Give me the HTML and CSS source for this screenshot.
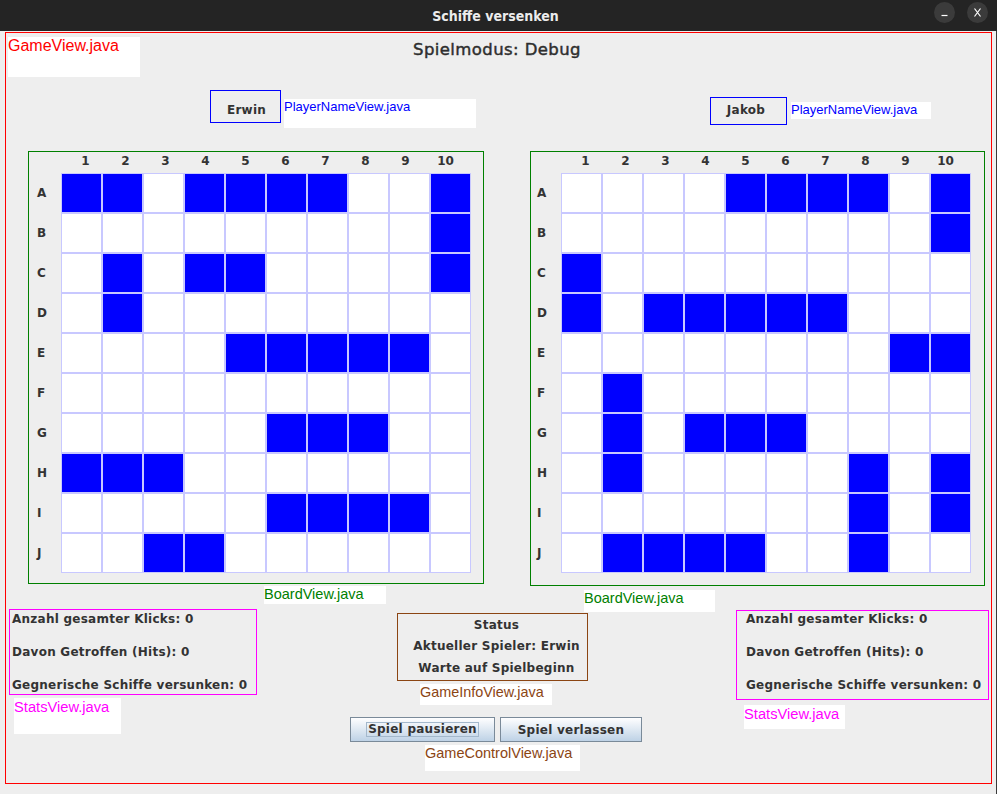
FILE: index.html
```html
<!DOCTYPE html>
<html lang="de">
<head>
<meta charset="utf-8">
<title>Schiffe versenken</title>
<link rel="stylesheet" href="styles.css">
</head>
<body>
<div class="titlebar">
  <div></div>
  <div class="title">Schiffe versenken</div>
  <div class="wbtns">
    <span class="wbtn"><svg width="21" height="21" viewBox="0 0 21 21"><line x1="7.5" y1="13.5" x2="13.5" y2="13.5" stroke="#fff" stroke-width="1.2"/></svg></span>
    <span class="wbtn"><svg width="21" height="21" viewBox="0 0 21 21"><path d="M7.5 6.5 L13.5 14.5 M13.5 6.5 L7.5 14.5" stroke="#fff" stroke-width="1.2" fill="none"/></svg></span>
  </div>
</div>
<div class="window">
<div class="gameview">
  <div class="header">
    <div class="tag tag-game">GameView.java</div>
    <div class="mode">Spielmodus: Debug</div>
    <div></div>
  </div>
  <div class="players">
    <div class="pgroup pgroup-left">
      <div class="pname pname-erwin">Erwin</div>
      <div class="tag tag-player tag-player-left">PlayerNameView.java</div>
    </div>
    <div class="pgroup pgroup-right">
      <div class="pname pname-jakob">Jakob</div>
      <div class="tag tag-player tag-player-right">PlayerNameView.java</div>
    </div>
  </div>
  <div class="boards">
    <div class="boardcol boardcol-left">
      <div class="board board-left">
        <div class="colhead"><span>1</span><span>2</span><span>3</span><span>4</span><span>5</span><span>6</span><span>7</span><span>8</span><span>9</span><span>10</span></div>
        <div class="grid">
          <span class="rl">A</span><i class="c s"></i><i class="c s"></i><i class="c"></i><i class="c s"></i><i class="c s"></i><i class="c s"></i><i class="c s"></i><i class="c"></i><i class="c"></i><i class="c s"></i>
          <span class="rl">B</span><i class="c"></i><i class="c"></i><i class="c"></i><i class="c"></i><i class="c"></i><i class="c"></i><i class="c"></i><i class="c"></i><i class="c"></i><i class="c s"></i>
          <span class="rl">C</span><i class="c"></i><i class="c s"></i><i class="c"></i><i class="c s"></i><i class="c s"></i><i class="c"></i><i class="c"></i><i class="c"></i><i class="c"></i><i class="c s"></i>
          <span class="rl">D</span><i class="c"></i><i class="c s"></i><i class="c"></i><i class="c"></i><i class="c"></i><i class="c"></i><i class="c"></i><i class="c"></i><i class="c"></i><i class="c"></i>
          <span class="rl">E</span><i class="c"></i><i class="c"></i><i class="c"></i><i class="c"></i><i class="c s"></i><i class="c s"></i><i class="c s"></i><i class="c s"></i><i class="c s"></i><i class="c"></i>
          <span class="rl">F</span><i class="c"></i><i class="c"></i><i class="c"></i><i class="c"></i><i class="c"></i><i class="c"></i><i class="c"></i><i class="c"></i><i class="c"></i><i class="c"></i>
          <span class="rl">G</span><i class="c"></i><i class="c"></i><i class="c"></i><i class="c"></i><i class="c"></i><i class="c s"></i><i class="c s"></i><i class="c s"></i><i class="c"></i><i class="c"></i>
          <span class="rl">H</span><i class="c s"></i><i class="c s"></i><i class="c s"></i><i class="c"></i><i class="c"></i><i class="c"></i><i class="c"></i><i class="c"></i><i class="c"></i><i class="c"></i>
          <span class="rl">I</span><i class="c"></i><i class="c"></i><i class="c"></i><i class="c"></i><i class="c"></i><i class="c s"></i><i class="c s"></i><i class="c s"></i><i class="c s"></i><i class="c"></i>
          <span class="rl">J</span><i class="c"></i><i class="c"></i><i class="c s"></i><i class="c s"></i><i class="c"></i><i class="c"></i><i class="c"></i><i class="c"></i><i class="c"></i><i class="c"></i>
        </div>
      </div>
      <div class="tag tag-board tag-board-left">BoardView.java</div>
    </div>
    <div class="boardcol boardcol-right">
      <div class="board board-right">
        <div class="colhead"><span>1</span><span>2</span><span>3</span><span>4</span><span>5</span><span>6</span><span>7</span><span>8</span><span>9</span><span>10</span></div>
        <div class="grid">
          <span class="rl">A</span><i class="c"></i><i class="c"></i><i class="c"></i><i class="c"></i><i class="c s"></i><i class="c s"></i><i class="c s"></i><i class="c s"></i><i class="c"></i><i class="c s"></i>
          <span class="rl">B</span><i class="c"></i><i class="c"></i><i class="c"></i><i class="c"></i><i class="c"></i><i class="c"></i><i class="c"></i><i class="c"></i><i class="c"></i><i class="c s"></i>
          <span class="rl">C</span><i class="c s"></i><i class="c"></i><i class="c"></i><i class="c"></i><i class="c"></i><i class="c"></i><i class="c"></i><i class="c"></i><i class="c"></i><i class="c"></i>
          <span class="rl">D</span><i class="c s"></i><i class="c"></i><i class="c s"></i><i class="c s"></i><i class="c s"></i><i class="c s"></i><i class="c s"></i><i class="c"></i><i class="c"></i><i class="c"></i>
          <span class="rl">E</span><i class="c"></i><i class="c"></i><i class="c"></i><i class="c"></i><i class="c"></i><i class="c"></i><i class="c"></i><i class="c"></i><i class="c s"></i><i class="c s"></i>
          <span class="rl">F</span><i class="c"></i><i class="c s"></i><i class="c"></i><i class="c"></i><i class="c"></i><i class="c"></i><i class="c"></i><i class="c"></i><i class="c"></i><i class="c"></i>
          <span class="rl">G</span><i class="c"></i><i class="c s"></i><i class="c"></i><i class="c s"></i><i class="c s"></i><i class="c s"></i><i class="c"></i><i class="c"></i><i class="c"></i><i class="c"></i>
          <span class="rl">H</span><i class="c"></i><i class="c s"></i><i class="c"></i><i class="c"></i><i class="c"></i><i class="c"></i><i class="c"></i><i class="c s"></i><i class="c"></i><i class="c s"></i>
          <span class="rl">I</span><i class="c"></i><i class="c"></i><i class="c"></i><i class="c"></i><i class="c"></i><i class="c"></i><i class="c"></i><i class="c s"></i><i class="c"></i><i class="c s"></i>
          <span class="rl">J</span><i class="c"></i><i class="c s"></i><i class="c s"></i><i class="c s"></i><i class="c s"></i><i class="c"></i><i class="c"></i><i class="c s"></i><i class="c"></i><i class="c"></i>
        </div>
      </div>
      <div class="tag tag-board tag-board-right">BoardView.java</div>
    </div>
  </div>
  <div class="bottom">
    <div class="leftcol">
      <div class="stats stats-left">
        <div>Anzahl gesamter Klicks: 0</div>
        <div>Davon Getroffen (Hits): 0</div>
        <div>Gegnerische Schiffe versunken: 0</div>
      </div>
      <div class="tag tag-stats tag-stats-left">StatsView.java</div>
    </div>
    <div class="midcol">
      <div class="info">
        <div>Status</div>
        <div>Aktueller Spieler: Erwin</div>
        <div>Warte auf Spielbeginn</div>
      </div>
      <div class="tag tag-info">GameInfoView.java</div>
      <div class="btns">
        <button class="btn btn-pause"><span class="focus">Spiel pausieren</span></button>
        <button class="btn btn-leave">Spiel verlassen</button>
      </div>
      <div class="tag tag-ctrl">GameControlView.java</div>
    </div>
    <div class="rightcol">
      <div class="stats stats-right">
        <div>Anzahl gesamter Klicks: 0</div>
        <div>Davon Getroffen (Hits): 0</div>
        <div>Gegnerische Schiffe versunken: 0</div>
      </div>
      <div class="tag tag-stats tag-stats-right">StatsView.java</div>
    </div>
  </div>
</div>
</div>
</body>
</html>
```
FILE: styles.css
```css
* { box-sizing: border-box; }
html, body { margin: 0; padding: 0; }
body {
  width: 997px;
  height: 794px;
  overflow: hidden;
  background: #eeeeee;
  font-family: "DejaVu Sans", sans-serif;
  color: #333333;
}

/* title bar */
.titlebar {
  height: 31px;
  background: #242424;
  display: grid;
  grid-template-columns: 1fr auto 1fr;
  align-items: center;
}
.title {
  font-family: "DejaVu Sans Condensed", "DejaVu Sans", sans-serif;
  font-weight: bold;
  font-size: 14px;
  color: #ececec;
  padding-right: 6px;
}
.wbtns {
  justify-self: end;
  display: flex;
  gap: 12px;
  margin-right: 9px;
  margin-top: -6px;
}
.wbtn {
  width: 21px;
  height: 21px;
  border-radius: 50%;
  background: #3b3b3b;
  display: block;
}
.wbtn svg { display: block; }

.window {
  height: 763px;
  border-right: 1px solid #3a3a3a;
  padding-top: 1px;
}

/* main frame */
.gameview {
  margin-left: 5px;
  width: 987px;
  height: 752px;
  border: 1px solid #ff0000;
}

.tag {
  font-family: "Liberation Sans", Arial, sans-serif;
  background: #ffffff;
  white-space: nowrap;
}

.header {
  display: grid;
  grid-template-columns: 1fr auto 1fr;
  align-items: start;
  height: 52px;
}
.tag-game {
  color: #ff0000;
  font-size: 16px;
  line-height: 18px;
  width: 132px;
  height: 40px;
  margin: 4px 0 0 2px;
}
.mode {
  font-size: 16.5px;
  letter-spacing: 0.4px;
  line-height: 20px;
  margin-top: 7px;
  padding-right: 3px;
  color: #2e2e2e;
  -webkit-text-stroke: 0.45px #2e2e2e;
}

/* players */
.players {
  display: flex;
  align-items: flex-start;
  height: 65px;
}
.pgroup { display: flex; align-items: flex-start; }
.pgroup-left { margin: 5px 0 0 204px; gap: 3px; }
.pgroup-right { margin: 12px 0 0 234px; gap: 4px; }
.pname {
  border: 1px solid #0000ff;
  font-weight: bold;
  font-size: 12px;
  letter-spacing: 0.25px;
  line-height: 14px;
  text-align: center;
}
.pname-erwin { width: 71px; height: 33px; padding: 12px 0 0 2px; }
.pname-jakob { width: 77px; height: 28px; padding: 4.5px 5px 0 0; }
.tag-player { color: #0000ff; font-size: 13px; line-height: 15px; }
.tag-player-left { width: 192px; height: 29px; margin-top: 9px; }
.tag-player-right { width: 140px; height: 17px; margin-top: 5px; }

/* boards */
.boards {
  display: flex;
  align-items: flex-start;
  height: 459px;
}
.boardcol-left { margin: 1px 0 0 22px; }
.boardcol-right { margin: 1px 0 0 46px; }
.board { border: 1px solid #008000; }
.board-left { width: 456px; height: 433px; --lab: 32px; }
.board-right { width: 455px; height: 435px; --lab: 30px; }
.colhead {
  display: flex;
  height: 21px;
  padding-left: calc(var(--lab) + 4.5px);
}
.colhead span {
  width: 40px;
  text-align: center;
  font-weight: bold;
  font-size: 12px;
  line-height: 18px;
}
.grid {
  display: grid;
  grid-template-columns: var(--lab) repeat(10, 41px);
  grid-auto-rows: 40px;
}
.rl {
  font-weight: bold;
  font-size: 12px;
  line-height: 40px;
  padding-left: calc(var(--lab) - 24px);
}
.c {
  display: block;
  background: #ffffff;
  border: 1px solid #c8c8ff;
}
.c.s { background: #0000ff; }

.tag-board { color: #008000; font-size: 14.5px; line-height: 17px; }
.tag-board-left { width: 122px; height: 18px; margin: 2px 0 0 236px; }
.tag-board-right { width: 131px; height: 22px; margin: 4px 0 0 54px; }

/* bottom */
.bottom { display: flex; align-items: flex-start; }
.leftcol { margin-left: 3px; }
.stats {
  border: 1px solid #ff00ff;
  display: flex;
  flex-direction: column;
  gap: 17px;
  font-weight: bold;
  font-size: 12px;
  letter-spacing: 0.25px;
  line-height: 16px;
  white-space: nowrap;
}
.stats-left { width: 248px; height: 86px; padding: 0.5px 0 0 2px; }
.stats-right { width: 253px; height: 90px; padding-left: 9px; }
.tag-stats { color: #ff00ff; font-size: 14.7px; line-height: 17px; padding-top: 1px; }
.tag-stats-left { width: 107px; height: 36px; margin: 3px 0 0 5px; }
.tag-stats-right { width: 101px; height: 24px; margin: 5px 0 0 8px; }

.midcol { margin-left: 93px; width: 292px; }
.info {
  margin: 4px 0 0 47px;
  width: 191px;
  height: 68px;
  border: 1px solid #8b4513;
  display: flex;
  flex-direction: column;
  align-items: center;
  gap: 5.5px;
  padding: 2.5px 0 0 8px;
  font-weight: bold;
  font-size: 12px;
  letter-spacing: 0.25px;
  line-height: 16px;
  white-space: nowrap;
}
.tag-info {
  color: #8b4513;
  font-size: 14.4px;
  line-height: 17px;
  width: 132px;
  height: 21px;
  margin: 3px 0 0 70px;
}
.btns { display: flex; gap: 5px; margin-top: 12px; }
.btn {
  height: 25px;
  border: 1px solid #7a8a99;
  border-radius: 0;
  background: linear-gradient(#fefeff, #dbe6f1 55%, #bed2e6);
  font-family: "DejaVu Sans", sans-serif;
  font-weight: bold;
  font-size: 12px;
  letter-spacing: 0.25px;
  color: #333333;
  display: flex;
  align-items: center;
  justify-content: center;
  padding: 0;
}
.btn-pause { width: 145px; }
.btn-leave { width: 142px; }
.focus {
  border: 1px solid #a3b8cc;
  padding: 0 1px;
  line-height: 13px;
}
.tag-ctrl {
  color: #8b4513;
  font-size: 14.5px;
  line-height: 17px;
  width: 155px;
  height: 26px;
  margin: 3px 0 0 75px;
}

.rightcol { margin: 1px 0 0 94px; }
```
